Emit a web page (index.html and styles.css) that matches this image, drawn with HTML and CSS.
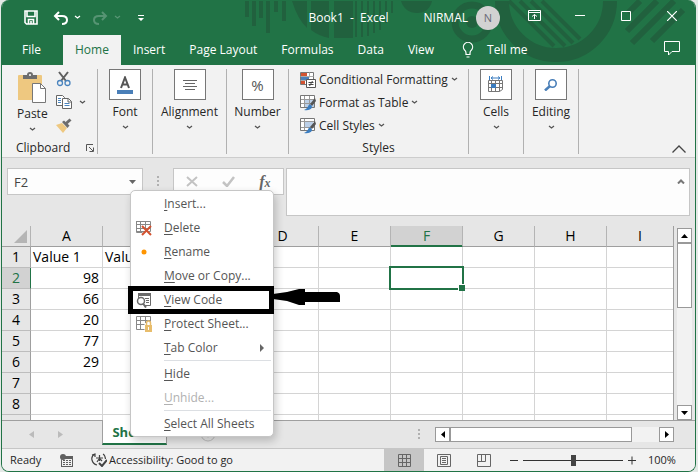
FILE: index.html
```
<!DOCTYPE html>
<html lang="en">
<head>
    <meta charset="UTF-8">
    <title>Book1 - Excel</title>
    <link rel="stylesheet" href="styles.css">
</head>
<body>
<div class="window">
    <header class="titlebar">
        <svg class="pattern" width="440" height="65" viewBox="0 0 440 65" fill="none" stroke="#21613e">
            <path d="M2 1v16M9 1v25M16 1v17M23 1v32M31 1v11M39 1v20" stroke-width="4"/>
            <path d="M47 1h15v27q-9-8-15-27zM66 1h18v37q-10-2-18-8zM89 1h19v37h-19z" fill="#21613e" stroke="none"/>
            <path d="M111 1v36M117 1v36M123 1v35M129 1v32M135 1v29M141 1v22M147 1v12" stroke-width="2"/>
            <path d="M156 1h31q-3 12-15 12t-16-12z" fill="#21613e" stroke="none"/>
            <circle cx="227" cy="22" r="17" stroke-width="7"/>
            <circle cx="227" cy="22" r="6" fill="#21613e" stroke="none"/>
            <path d="M257 1a54 54 0 0 0 108 0" stroke-width="14"/>
            <path d="M264 1l45 45M275 1l45 45M286 1l42 42M297 1l38 38" stroke-width="4"/>
            <path d="M395 1l-12 12M412 1l-30 30M429 1l-42 42M438 10l-31 31" stroke-width="6"/>
        </svg>
        <div class="quick">
            <button class="plain" aria-label="Save">
                <svg width="14" height="15" viewBox="0 0 14 15" fill="none" stroke="#fff" stroke-width="1.6"><path d="M1 1h12v13H2.500L1 12.500zM3 1.500v5h8v-5M4.500 13.500v-4h5v4M7 11v2.500"/></svg>
            </button>
            <button class="plain undo" aria-label="Undo">
                <svg width="15" height="14" viewBox="0 0 15 14" fill="none" stroke="#fff" stroke-width="2"><path d="M6 1L2 5l4 4M2 5h7q5 0 5 4t-5 4"/></svg>
            </button>
            <svg class="chev" width="7" height="5"><path d="M1 1l2.500 2L6 1"/></svg>
            <button class="plain redo" aria-label="Redo" disabled>
                <svg width="15" height="14" viewBox="0 0 15 14" fill="none" stroke="#569473" stroke-width="2"><path d="M9 1l4 4-4 4M13 5H6Q1 5 1 9t5 4"/></svg>
            </button>
            <svg class="chev dim" width="7" height="5"><path d="M1 1l2.500 2L6 1"/></svg>
            <button class="plain more" aria-label="Customize Quick Access Toolbar">
                <svg width="6" height="6" fill="#fff"><path d="M0 0h6v1H0zM0 3h6L3 6z"/></svg>
            </button>
        </div>
        <h1>Book1&nbsp; -&nbsp; Excel</h1>
        <span class="user">NIRMAL</span>
        <span class="avatar">N</span>
        <div class="controls">
            <button class="plain" aria-label="Ribbon Display Options">
                <svg width="13" height="11" viewBox="0 0 13 11" fill="none" stroke="#fff"><path d="M.5.500h12v10H.5zM.5 2.500h12M6.500 9V4.500M4 6.500l2.500-2L9 6.500"/></svg>
            </button>
            <button class="plain" aria-label="Minimize"><svg width="10" height="10"><path d="M0 4.500h10" stroke="#fff"/></svg></button>
            <button class="plain" aria-label="Maximize"><svg width="10" height="10"><path d="M.5.500h9v9h-9z" fill="none" stroke="#fff"/></svg></button>
            <button class="plain" aria-label="Close"><svg width="10" height="10"><path d="M0 0l10 10M10 0L0 10" stroke="#fff" stroke-width="1.200"/></svg></button>
        </div>
    </header>

    <nav class="tabs">
        <button>File</button>
        <button class="active">Home</button>
        <button>Insert</button>
        <button>Page Layout</button>
        <button>Formulas</button>
        <button>Data</button>
        <button>View</button>
        <button class="tellme">
            <svg width="12" height="16" viewBox="0 0 12 16" fill="none" stroke="#fff" stroke-width="1.200"><path d="M4 11Q4 9 2.500 8A4.600 4.600 0 1 1 9.500 8Q8 9 8 11v1.500H4zM4.500 15h3"/></svg>
            Tell me
        </button>
        <button class="comments" aria-label="Comments">
            <svg width="16" height="15" viewBox="0 0 16 15" fill="none" stroke="#fff"><path d="M.5.500h15v10H8l-3.500 3.500v-3.500h-4z"/></svg>
        </button>
    </nav>

    <section class="ribbon">
        <div class="group clipboard">
            <div class="clip-tools">
                <button class="plain paste">
                    <svg width="28" height="31" viewBox="0 0 28 31"><path d="M0 4q0-1 1-1h22q1 0 1 1v24H0z" fill="#eec880"/><path d="M5 7V3h4q0-3 3-3t3 3h4v4z" fill="#6d6d6d"/><circle cx="12" cy="3" r="1" fill="#fff"/><path d="M14.500 11.500h8l5 5v14h-13z" fill="#fff" stroke="#777"/><path d="M22.500 11.500v5h5" fill="none" stroke="#777"/></svg>
                    <span>Paste</span>
                    <svg class="chev dark" width="7" height="5"><path d="M1 1l2.500 2L6 1"/></svg>
                </button>
                <div class="clip-side">
                    <button class="plain" aria-label="Cut">
                        <svg width="16" height="16" viewBox="0 0 16 16" fill="none"><path d="M3 1l7 9M12 1L5 10" stroke="#5f5f5f" stroke-width="2"/><circle cx="4" cy="12" r="2.500" stroke="#4a84be" stroke-width="1.300"/><circle cx="11.500" cy="12" r="2.500" stroke="#4a84be" stroke-width="1.300"/></svg>
                    </button>
                    <button class="plain copy" aria-label="Copy">
                        <svg width="16" height="15" viewBox="0 0 16 15" fill="#fff" stroke="#666"><path d="M.5.500h6l2 2v8h-8z"/><path d="M6.500 3.500h6l3 3v7h-9z"/><path d="M12 3.500v3.500h3.500" fill="none"/><path d="M2 3.500h3M2 5.500h3M2 7.500h3M8.500 8.500h5M8.500 10.500h5" stroke="#4a84be"/></svg>
                        <svg class="chev dark" width="7" height="5"><path d="M1 1l2.500 2L6 1"/></svg>
                    </button>
                    <button class="plain" aria-label="Format Painter">
                        <svg width="16" height="15" viewBox="0 0 16 15"><path d="M0 7l6-2 5 5-4 5z" fill="#eec880"/><path d="M6 4l2-1.500 5.500 5-2 2.500z" fill="#6d6d6d"/><path d="M10 5.500L14.500 1.500" stroke="#6d6d6d" stroke-width="3"/></svg>
                    </button>
                </div>
            </div>
            <div class="caption">Clipboard
                <button class="plain launcher" aria-label="Clipboard settings"><svg width="8" height="8" fill="none" stroke="#555"><path d="M.5 7V.500H7M3 3l4 4M7.500 3.500v4h-4"/></svg></button>
            </div>
        </div>
        <div class="group font">
            <button class="plain big">
                <span class="tile"><svg width="16" height="18" viewBox="0 0 16 18"><path d="M4 12L8 1.500 12 12M5.500 8.500h5" fill="none" stroke="#555" stroke-width="2"/><path d="M0 14h16v4H0z" fill="#4a7fb8"/></svg></span>
                Font
                <svg class="chev dark" width="7" height="5"><path d="M1 1l2.500 2L6 1"/></svg>
            </button>
        </div>
        <div class="group alignment">
            <button class="plain big">
                <span class="tile"><svg width="14" height="12" stroke="#666"><path d="M0 1.500h14M2 4.500h10M0 7.500h14M2 10.500h10"/></svg></span>
                Alignment
                <svg class="chev dark" width="7" height="5"><path d="M1 1l2.500 2L6 1"/></svg>
            </button>
        </div>
        <div class="group number">
            <button class="plain big">
                <span class="tile percent">%</span>
                Number
                <svg class="chev dark" width="7" height="5"><path d="M1 1l2.500 2L6 1"/></svg>
            </button>
        </div>
        <div class="group styles">
            <button class="plain row">
                <svg width="16" height="16" viewBox="0 0 16 16"><path d="M.5.500h13v12H.5z" fill="#fff" stroke="#777"/><path d="M1 1h6v3H1zM1 9h4v3H1z" fill="#d35230"/><path d="M1 5h8v3H1z" fill="#4a7fb8"/><path d="M.5 4.500h13M.5 8.500h6M9.500.500v5" stroke="#aaa"/><path d="M6.500 7.500h9v8h-9z" fill="#fff" stroke="#555"/><path d="M8.500 10.500h5M8.500 12.500h5M12.500 9l-3 5" stroke="#444"/></svg>
                Conditional Formatting
                <svg class="chev dark" width="7" height="5"><path d="M1 1l2.500 2L6 1"/></svg>
            </button>
            <button class="plain row">
                <svg width="16" height="16" viewBox="0 0 16 16"><path d="M.5.500h14v12H.5z" fill="#fff" stroke="#777"/><path d="M5 5h9v7H5z" fill="#bcd0e8"/><path d="M1 4.500h13M1 8.500h13M4.500 1v11M9.500 1v11" stroke="#999"/><path d="M15 3l-5 6 2 2 4-5z" fill="#555"/><path d="M9 9.500q3 0 3 3Q10 16 4 15q3-1 5-5.500z" fill="#3b7dc0"/></svg>
                Format as Table
                <svg class="chev dark" width="7" height="5"><path d="M1 1l2.500 2L6 1"/></svg>
            </button>
            <button class="plain row">
                <svg width="16" height="16" viewBox="0 0 16 16"><path d="M.5.500h14v12H.5z" fill="#fff" stroke="#777"/><path d="M5 4h8v6H5z" fill="#bcd0e8"/><path d="M1 3.500h13M1 9.500h13M4.500 1v11" stroke="#999"/><path d="M15 3l-5 6 2 2 4-5z" fill="#555"/><path d="M9 9.500q3 0 3 3Q10 16 4 15q3-1 5-5.500z" fill="#3b7dc0"/></svg>
                Cell Styles
                <svg class="chev dark" width="7" height="5"><path d="M1 1l2.500 2L6 1"/></svg>
            </button>
            <div class="caption">Styles</div>
        </div>
        <div class="group cells">
            <button class="plain big">
                <span class="tile"><svg width="16" height="17" viewBox="0 0 16 17" fill="none"><path d="M1.500 0v4M13.500 0v4M3 2h9M5 .500L3 2l2 1.500M10 .500L12 2l-2 1.500" stroke="#3b7dc0"/><path d="M.5 4.500h14v9l-3 2H.5zM.5 7.500h14M.5 11.500h14M3.500 4.500v11M7.500 4.500v11M11.500 4.500v11" stroke="#777"/><path d="M3 8h5v4H3z" fill="#3b7dc0"/></svg></span>
                Cells
                <svg class="chev dark" width="7" height="5"><path d="M1 1l2.500 2L6 1"/></svg>
            </button>
        </div>
        <div class="group editing">
            <button class="plain big">
                <span class="tile"><svg width="14" height="12" viewBox="0 0 14 12" fill="none" stroke="#4a7fb8"><circle cx="8.500" cy="4.500" r="3.700" stroke-width="1.600"/><path d="M6 7l-5 4.500" stroke-width="2.500"/></svg></span>
                Editing
                <svg class="chev dark" width="7" height="5"><path d="M1 1l2.500 2L6 1"/></svg>
            </button>
        </div>
        <button class="plain collapse" aria-label="Collapse the Ribbon"><svg width="14" height="8"><path d="M.5 7.500L7 1l6.500 6.500" fill="none" stroke="#444" stroke-width="1.300"/></svg></button>
    </section>

    <section class="formula-bar">
        <div class="name-box">
            <input type="text" value="F2" aria-label="Name Box">
            <button class="plain" aria-label="Name list"><svg width="7" height="4" fill="#666"><path d="M0 0h7L3.500 4z"/></svg></button>
        </div>
        <span class="grip"></span>
        <div class="entry">
            <button class="plain" aria-label="Cancel"><svg width="12" height="11"><path d="M1 1l10 9M11 1L1 10" stroke="#c3c3c3" stroke-width="2"/></svg></button>
            <button class="plain" aria-label="Enter"><svg width="13" height="11"><path d="M1 6l4 4 7-9" fill="none" stroke="#c3c3c3" stroke-width="2.500"/></svg></button>
            <button class="plain fx" aria-label="Insert Function">f<small>x</small></button>
        </div>
        <div class="formula">
            <textarea aria-label="Formula Bar"></textarea>
            <button class="plain" aria-label="Collapse Formula Bar"><svg width="8" height="5"><path d="M1 4.500L4 1.500l3 3" fill="none" stroke="#777" stroke-width="2"/></svg></button>
        </div>
    </section>

    <main class="sheet">
        <div class="grid">
            <table>
                <colgroup><col class="row-col"><col span="8" class="data-col"><col></colgroup>
                <thead>
                    <tr><th class="corner"><svg width="13" height="13"><path d="M13 0v13H0z" fill="#b5b5b5"/></svg></th><th>A</th><th>B</th><th>C</th><th>D</th><th>E</th><th class="on">F</th><th>G</th><th>H</th><th>I</th></tr>
                </thead>
                <tbody>
                    <tr><th>1</th><td class="text">Value 1</td><td class="text">Value 2</td><td></td><td></td><td></td><td></td><td></td><td></td><td></td></tr>
                    <tr><th class="on">2</th><td>98</td><td></td><td></td><td></td><td></td><td class="selected"></td><td></td><td></td><td></td></tr>
                    <tr><th>3</th><td>66</td><td></td><td></td><td></td><td></td><td></td><td></td><td></td><td></td></tr>
                    <tr><th>4</th><td>20</td><td></td><td></td><td></td><td></td><td></td><td></td><td></td><td></td></tr>
                    <tr><th>5</th><td>77</td><td></td><td></td><td></td><td></td><td></td><td></td><td></td><td></td></tr>
                    <tr><th>6</th><td>29</td><td></td><td></td><td></td><td></td><td></td><td></td><td></td><td></td></tr>
                    <tr><th>7</th><td></td><td></td><td></td><td></td><td></td><td></td><td></td><td></td><td></td></tr>
                    <tr><th>8</th><td></td><td></td><td></td><td></td><td></td><td></td><td></td><td></td><td></td></tr>
                    <tr><th></th><td></td><td></td><td></td><td></td><td></td><td></td><td></td><td></td><td></td></tr>
                </tbody>
            </table>
        </div>
        <div class="vscroll">
            <button class="scroll-btn" aria-label="Scroll up"><svg width="7" height="4"><path d="M0 4h7L3.500 0z"/></svg></button>
            <div class="thumb"></div>
            <button class="scroll-btn" aria-label="Scroll down"><svg width="7" height="4"><path d="M0 0h7L3.500 4z"/></svg></button>
        </div>
    </main>

    <div class="sheet-tabs">
        <div class="sheet-nav">
            <button class="plain" aria-label="Previous sheet"><svg width="5" height="7" fill="#bbb"><path d="M5 0v7L0 3.500z"/></svg></button>
            <button class="plain" aria-label="Next sheet"><svg width="5" height="7" fill="#bbb"><path d="M0 0v7l5-3.500z"/></svg></button>
        </div>
        <button class="sheet-tab">Sheet1</button>
        <button class="plain add" aria-label="New sheet"><svg width="16" height="16" fill="none" stroke="#bbb"><circle cx="8" cy="8" r="7"/><path d="M8 4.500v7M4.500 8h7"/></svg></button>
        <span class="grip"></span>
        <div class="hscroll">
            <button class="scroll-btn" aria-label="Scroll left"><svg width="4" height="7"><path d="M4 0v7L0 3.500z"/></svg></button>
            <div class="thumb"></div>
            <button class="scroll-btn" aria-label="Scroll right"><svg width="4" height="7"><path d="M0 0v7l4-3.500z"/></svg></button>
        </div>
    </div>

    <footer class="status">
        <span class="ready">Ready</span>
        <button class="plain" aria-label="Record macro"><svg width="13" height="13" viewBox="0 0 13 13"><path d="M2 2h11v11H1V7" fill="#5f5f5f"/><path d="M2 5h10v7H2z" fill="#f2f2f2"/><path d="M3 6.500h2M6 6.500h2M9 6.500h2M3 8.500h2M6 8.500h2M9 8.500h2M3 10.500h2M6 10.500h2M9 10.500h2" stroke="#5f5f5f"/><circle cx="3" cy="3" r="3" fill="#5f5f5f"/></svg></button>
        <button class="plain access"><svg width="16" height="14" viewBox="0 0 16 14" fill="none" stroke="#444" stroke-width="1.200"><path d="M4 1Q0 3 1 7q1 4 5 5M1 2l3-1v3M12 1q2 1 2.500 5M5 5h7M8.500 2v6M6 9l2-3M11 8l-2-2"/><path d="M8 10l3 3 5-6" stroke-width="2"/></svg>Accessibility: Good to go</button>
        <div class="views">
            <button class="plain current" aria-label="Normal"><svg width="13" height="13" fill="none" stroke="#666"><path d="M.5.500h12v12H.5zM.5 4.500h12M.5 8.500h12M4.500.500v12M8.500.500v12"/></svg></button>
            <button class="plain" aria-label="Page Layout"><svg width="14" height="13" fill="none" stroke="#666"><path d="M.5.500h13v12H.5zM3.500 2.500h7v8h-7zM5 4.500h4M5 6.500h4M5 8.500h4"/></svg></button>
            <button class="plain" aria-label="Page Break Preview"><svg width="14" height="13" fill="none" stroke="#666"><path d="M.5.500h13v12H.5zM.5 7.500h8v-7M4.500.500v7"/></svg></button>
        </div>
        <button class="plain zoom-out" aria-label="Zoom out"><svg width="8" height="8" stroke="#333"><path d="M0 4.500h8"/></svg></button>
        <input class="zoom" type="range" min="0" max="100" value="50" aria-label="Zoom">
        <button class="plain zoom-in" aria-label="Zoom in"><svg width="8" height="9" stroke="#333"><path d="M0 4.500h8M4 .500v8"/></svg></button>
        <span class="percentage">100%</span>
    </footer>

    <div class="menu" role="menu">
        <button role="menuitem"><span class="icon"></span><span><u>I</u>nsert...</span></button>
        <button role="menuitem"><span class="icon"><svg width="16" height="16" viewBox="0 0 16 16" fill="none"><path d="M.5 1.500h14v10H.5zM.5 4.500h14M.5 8.500h14M4.500 1v12M9.500 1v8M.5 1v11.500h6" stroke="#888"/><path d="M6 6l9 9M15 6l-9 9" stroke="#d35230" stroke-width="2"/></svg></span><span><u>D</u>elete</span></button>
        <button role="menuitem"><span class="icon"><svg width="16" height="16"><circle cx="8" cy="8" r="2.500" fill="#ff9500"/></svg></span><span><u>R</u>ename</span></button>
        <button role="menuitem"><span class="icon"></span><span><u>M</u>ove or Copy...</span></button>
        <button role="menuitem" class="marked"><span class="icon"><svg width="16" height="16" viewBox="0 0 16 16" fill="none" stroke="#6b6b6b"><path d="M2 1h13v3H2z" fill="#6b6b6b" stroke="none"/><path d="M2.500 2v4M14.500 2v11.500H9M9 6.500h4M10 8.500h3M10 10.500h3"/><circle cx="5" cy="9" r="3.500" stroke-width="1.500"/><path d="M7 11.500l3 4" stroke-width="2"/></svg></span><span><u>V</u>iew Code</span></button>
        <button role="menuitem"><span class="icon"><svg width="16" height="16" viewBox="0 0 16 16" fill="none"><path d="M.5.500h14v6M.5.500v13h8M.5 4.500h14M.5 8.500h8M4.500 1v12M9.500 1v6" stroke="#888"/><path d="M9 9h7v7H9z" fill="#e8bd6c"/><path d="M10.500 9V7q0-2 2-2t2 2v2" stroke="#e8bd6c" stroke-width="1.500"/><path d="M12.500 11v3" stroke="#fff"/></svg></span><span><u>P</u>rotect Sheet...</span></button>
        <button role="menuitem"><span class="icon"></span><span><u>T</u>ab Color</span><svg class="sub" width="4" height="8" fill="#666"><path d="M0 0v8l4-4z"/></svg></button>
        <hr>
        <button role="menuitem"><span class="icon"></span><span><u>H</u>ide</span></button>
        <button role="menuitem" disabled><span class="icon"></span><span><u>U</u>nhide...</span></button>
        <hr>
        <button role="menuitem"><span class="icon"></span><span><u>S</u>elect All Sheets</span></button>
        <!-- arrow pointing at View Code -->
        <svg class="pointer" width="68" height="16" viewBox="0 0 68 16"><path d="M0 5l14-2 12-3h6v3h32q3 1 3 4v6H32v3h-6l-12-4-14-2z"/></svg>
    </div>
</div>
</body>
</html>
```
FILE: styles.css
```
* {
  box-sizing: border-box;
}
body {
  margin: 0;
  padding: 0 2px 0 1px;
  background: #e4e9e6;
  font: 12px/16px "Open Sans", "Noto Sans", sans-serif;
  color: #262626;
}
button, input, textarea {
  font: inherit;
  color: inherit;
  margin: 0;
}
svg {
  flex: none;
}
.window {
  position: relative;
  display: flex;
  flex-direction: column;
  height: 100vh;
  border: 1px solid #217346;
  border-top: none;
  border-radius: 8px;
  overflow: hidden;
  background: #e6e6e6;
}
.plain {
  display: flex;
  align-items: center;
  justify-content: center;
  border: none;
  padding: 0;
  background: none;
}
.chev {
  fill: none;
  stroke: #fff;
  stroke-width: 1.3;
}
.chev.dim {
  stroke: #569473;
}
.chev.dark {
  stroke: #555;
}

/* title bar */
.titlebar {
  display: flex;
  align-items: center;
  height: 35px;
  flex: none;
  background: #217346;
  box-shadow: 0 30px 0 #217346;
  color: #fff;
}
.pattern {
  position: absolute;
  top: 0;
  right: 0;
  width: 460px;
  height: 65px;
}
.quick {
  display: flex;
  align-items: center;
  margin-left: 22px;
  flex: 1;
}
.undo {
  margin-left: 15px;
  margin-right: 6px;
}
.redo {
  margin-left: 12px;
  margin-right: 6px;
}
.more {
  margin-left: 17px;
}
h1 {
  position: relative;
  margin: 0;
  font-size: 12px;
  font-weight: normal;
}
.user {
  position: relative;
  margin-left: 35px;
}
.avatar {
  position: relative;
  margin-left: 8px;
  width: 24px;
  height: 24px;
  border-radius: 50%;
  background: #d2d2d2;
  color: #6b6b78;
  font-size: 11px;
  line-height: 24px;
  text-align: center;
}
.controls {
  position: relative;
  display: flex;
  margin: 0 0 4px 11px;
}
.controls button {
  width: 46px;
  height: 24px;
}

/* ribbon tabs */
.tabs {
  position: relative;
  display: flex;
  height: 30px;
  flex: none;
  padding-left: 8px;
}
.tabs button {
  border: none;
  background: none;
  padding: 0 12px;
  color: #fff;
  white-space: nowrap;
}
.tabs .active {
  margin-left: 10px;
  background: #f2f2f2;
  color: #217346;
}
.tabs .tellme {
  display: flex;
  align-items: center;
  gap: 13px;
  padding-left: 16px;
}
.tabs .comments {
  margin-left: auto;
  padding: 0 15px 0 0;
}

/* ribbon */
.ribbon {
  position: relative;
  display: flex;
  height: 93px;
  flex: none;
  padding: 4px 0 3px;
  background: #f2f2f2;
  border-bottom: 1px solid #cdcdcd;
}
.group {
  display: flex;
  flex-direction: column;
  border-right: 1px solid #b1b1b1;
  width: 55px;
}
.group.clipboard {
  width: 96px;
}
.group.alignment {
  width: 74px;
}
.group.number {
  width: 62px;
}
.group.styles {
  width: 180px;
  padding-left: 11px;
}
.big {
  flex-direction: column;
}
.tile {
  display: flex;
  align-items: center;
  justify-content: center;
  width: 32px;
  height: 31px;
  margin-bottom: 4px;
  border: 1px solid #777;
  background: #fff;
}
.big .chev {
  margin-top: 5px;
}
.percent {
  font-size: 15px;
  color: #555;
}
.clip-tools {
  display: flex;
  height: 68px;
  padding-left: 15px;
}
.paste {
  flex-direction: column;
  justify-content: flex-start;
  padding-top: 3px;
}
.paste span {
  margin: 3px 0 5px;
}
.clip-side {
  margin-left: 8px;
}
.clip-side button {
  height: 23px;
  padding-bottom: 3px;
}
.copy {
  gap: 7px;
}
.caption {
  display: flex;
  align-items: center;
  justify-content: center;
  margin-top: auto;
  height: 12px;
}
.styles .caption {
  padding-right: 11px;
}
.clipboard .caption {
  justify-content: flex-start;
  padding-left: 14px;
}
.launcher {
  margin-left: auto;
  margin-right: 3px;
}
.row {
  justify-content: flex-start;
  gap: 3px;
  height: 23px;
  padding-bottom: 2px;
}
.collapse {
  margin: auto 9px 1px auto;
}

/* name box and formula bar */
.formula-bar {
  display: flex;
  align-items: flex-start;
  height: 68px;
  flex: none;
  padding: 10px 5px;
}
.name-box, .entry, .formula {
  display: flex;
  height: 27px;
  border: 1px solid #c6c6c6;
  background: #fdfdfd;
}
.name-box {
  width: 136px;
}
.name-box input {
  flex: 1;
  min-width: 0;
  border: none;
  padding: 0 6px;
  background: none;
  font-size: 13px;
  color: #444;
}
.name-box button {
  width: 20px;
}
.grip {
  width: 2px;
  height: 10px;
  background: repeating-linear-gradient(#b0b0b0 0 2px, transparent 2px 4px);
}
.formula-bar .grip {
  margin: 8px 14px 0;
}
.entry {
  width: 111px;
}
.entry button {
  flex: 1;
}
.entry .fx {
  font: italic bold 16px "Liberation Serif", serif;
  color: #666;
}
.fx small {
  font-size: 12px;
  padding-top: 3px;
}
.formula {
  flex: 1;
  height: 48px;
  margin-left: 2px;
}
.formula textarea {
  flex: 1;
  border: none;
  resize: none;
  background: none;
}
.formula button {
  width: 16px;
  height: 24px;
}

/* cells */
.sheet {
  display: flex;
  flex: 1;
  min-height: 0;
}
.grid {
  flex: 1;
  overflow: hidden;
  border-right: 1px solid #9f9f9f;
  background: #fff;
}
table {
  width: 100%;
  table-layout: fixed;
  border-collapse: separate;
  border-spacing: 0;
  font-size: 14px;
  line-height: 20px;
  color: #000;
}
.row-col {
  width: 29px;
}
.data-col {
  width: 72px;
}
td, th {
  height: 21px;
  padding: 0 3px 0 2px;
  border-right: 1px solid #d4d4d4;
  border-bottom: 1px solid #d4d4d4;
  text-align: right;
}
th {
  padding: 0;
  background: #e6e6e6;
  font-weight: normal;
  text-align: center;
}
td.text {
  text-align: left;
}
thead th {
  border-right-color: #b4b4b4;
  border-bottom-color: #9f9f9f;
}
tbody th {
  border-right-color: #9f9f9f;
  border-bottom-color: #bdbdbd;
}
td:last-child, thead th:last-child {
  border-right: none;
}
.corner svg {
  display: block;
  margin-left: 12px;
}
th.on {
  background: #d2d2d2;
  color: #217346;
}
thead .on {
  box-shadow: inset 0 -1px #217346;
  border-bottom-color: #217346;
}
tbody th.on {
  border-right-color: #217346;
}
.selected {
  position: relative;
}
.selected::before {
  content: "";
  position: absolute;
  inset: -2px;
  border: 2px solid #217346;
}
.selected::after {
  content: "";
  position: absolute;
  right: -3px;
  bottom: -3px;
  width: 6px;
  height: 6px;
  border: solid #fff;
  border-width: 1px 0 0 1px;
  background: #217346;
}
.vscroll {
  display: flex;
  flex-direction: column;
  width: 15px;
  margin: 2px 3px 0;
  background: #f2f2f2;
}
.scroll-btn, .thumb {
  flex: none;
  border: 1px solid #999;
  background: #fff;
}
.scroll-btn {
  display: flex;
  align-items: center;
  justify-content: center;
  width: 15px;
  height: 15px;
  padding: 0;
}
.vscroll .thumb {
  height: 65px;
  margin-bottom: auto;
}

/* sheet tabs */
.sheet-tabs {
  display: flex;
  align-items: center;
  height: 28px;
  flex: none;
  padding-right: 21px;
  background: linear-gradient(#9f9f9f 1px, transparent 1px);
}
.sheet-nav {
  display: flex;
  justify-content: center;
  gap: 24px;
  width: 100px;
  padding-right: 13px;
}
.sheet-tab {
  align-self: flex-start;
  width: 65px;
  height: 25px;
  border: 1px solid #9f9f9f;
  border-width: 0 1px 2px;
  border-bottom-color: #217346;
  padding: 0;
  background: #fff;
  font-size: 13px;
  font-weight: bold;
  color: #217346;
}
.add {
  margin-left: 33px;
}
.sheet-tabs .grip {
  margin-left: auto;
  margin-right: 15px;
}
.hscroll {
  display: flex;
  width: 239px;
  background: #f2f2f2;
}
.hscroll .thumb {
  width: 182px;
  margin-right: auto;
}

/* status bar */
.status {
  display: flex;
  align-items: center;
  height: 23px;
  flex: none;
  padding: 0 19px 0 8px;
  border-top: 1px solid #c6c6c6;
  background: #f2f2f2;
  font-size: 11px;
}
.ready {
  width: 50px;
}
.access {
  margin-left: 18px;
  gap: 2px;
}
.views {
  display: flex;
  align-self: stretch;
  margin-left: auto;
}
.views button {
  width: 40px;
}
.views .current {
  background: #c6c6c6;
}
.zoom-out {
  margin: 0 5px 0 6px;
}
.zoom-in {
  margin: 0 12px 0 5px;
}
.zoom {
  appearance: none;
  width: 100px;
  height: 12px;
  background: linear-gradient(#333, #333) center / 100% 1px no-repeat;
}
.zoom::-webkit-slider-thumb {
  appearance: none;
  width: 5px;
  height: 11px;
  background: #444;
}
.percentage {
  width: 28px;
}

/* sheet context menu */
.menu {
  position: absolute;
  left: 128px;
  top: 190px;
  width: 144px;
  padding: 1px 0 0;
  border: 1px solid #c6c6c6;
  border-radius: 5px;
  background: #fff;
  box-shadow: 2px 4px 8px rgba(0, 0, 0, 0.2);
}
.menu button {
  position: relative;
  display: flex;
  align-items: center;
  width: 100%;
  height: 24px;
  border: none;
  padding: 0 9px 0 5px;
  background: none;
  color: #555;
}
.menu button:disabled {
  color: #b1b1b1;
}
.menu .icon {
  width: 16px;
  height: 16px;
  margin-right: 12px;
}
.menu u {
  text-underline-offset: 2px;
}
.menu hr {
  height: 1px;
  margin: 0 2px 1px 33px;
  border: none;
  background: #dcdfe3;
}
.sub {
  margin-left: auto;
}
.menu .marked::after {
  content: "";
  position: absolute;
  inset: -2px -1px -2px -3px;
  border: 5px solid #000;
}
.pointer {
  position: absolute;
  left: 142px;
  top: 98px;
}
```
